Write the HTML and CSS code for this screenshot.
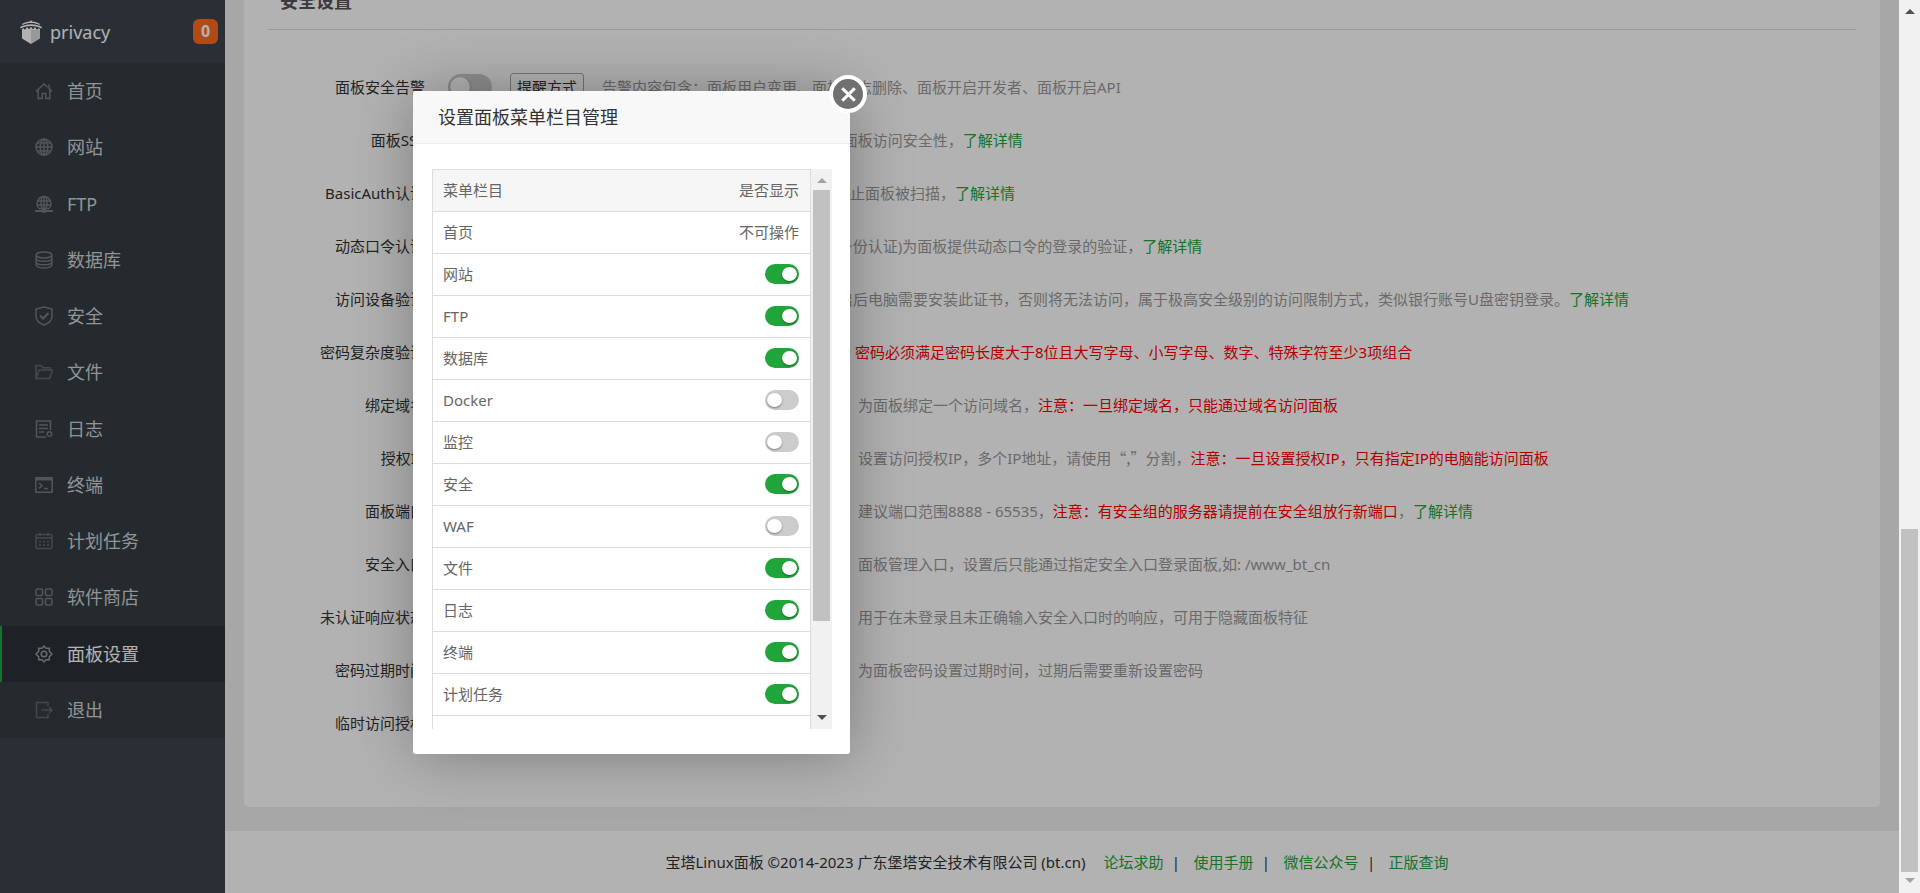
FILE: index.html
```html
<!DOCTYPE html>
<html lang="zh-CN">
<head>
<meta charset="utf-8">
<title>面板设置</title>
<link rel="stylesheet" href="styles.css">
</head>
<body>
<div class="app">
  <aside class="sidebar">
    <header class="brand">
      <svg class="logo" viewBox="0 0 22 24" fill="currentColor"><path d="M11 0l1 1.6c3 .2 5.500 1 8 2.400l-.6 1C16.500 3.600 14 3 11 3S5.500 3.600 2.600 5L2 4c2.500-1.400 5-2.200 8-2.400z"/><path d="M0 7c3.500-1.900 7-2.800 11-2.800S18.500 5.100 22 7l-.8 1.400C17.800 6.700 14.600 6 11 6S4.200 6.700.8 8.400z"/><path d="M2 9l2-.7v1.200l2-.5V7.800l2-.3v1.200h2V7.400h2v1.300h2V7.500l2 .3V9l2 .5V8.300l2 .7v9.500L11 24l-9-5.500z"/><path d="M11 9.500V24l9-5.500V10z" opacity=".2" fill="#3c444d"/></svg>
      <span class="brand-name">privacy</span>
      <span class="badge">0</span>
    </header>
    <nav>
      <ul class="menu">
        <li><a href="#"><svg class="icon" viewBox="0 0 18 18"><path d="M1 9.500L9 2l3.500 3.200M17 9.500l-3-2.800V2.500M3.200 8v8.500h4v-5h3.600v5h4V8"/></svg>首页</a></li>
        <li><a href="#"><svg class="icon" viewBox="0 0 18 18"><circle cx="9" cy="9" r="8"/><ellipse cx="9" cy="9" rx="3.800" ry="8"/><path d="M9 1v16M1 9h16M2.300 5h13.400M2.300 13h13.400"/></svg>网站</a></li>
        <li><a href="#"><svg class="icon" viewBox="0 0 18 18"><path d="M4 13.500a7 7 0 1 1 10 0z"/><ellipse cx="9" cy="8" rx="3" ry="6.500"/><path d="M9 1v12M2.500 6h13M2.500 10h13"/><path d="M0 16h18" stroke-width="2"/><path d="M7 16h4" stroke-width="3.500"/></svg>FTP</a></li>
        <li><a href="#"><svg class="icon" viewBox="0 0 18 18"><ellipse cx="9" cy="4" rx="7.800" ry="3"/><path d="M1.200 4v10c0 1.600 3.500 3 7.800 3s7.800-1.400 7.800-3V4M1.200 7.500c0 1.600 3.500 2.800 7.800 2.800s7.800-1.200 7.800-2.800M1.200 11c0 1.600 3.500 2.800 7.800 2.800s7.800-1.200 7.800-2.800"/></svg>数据库</a></li>
        <li><a href="#"><svg class="icon" viewBox="0 0 18 20"><path d="M9 1l8 2v7.500c0 4-3.500 6.800-8 8.500-4.500-1.700-8-4.500-8-8.500V3z"/><path d="M5 9.500l3 3L13.500 7" stroke-width="2"/></svg>安全</a></li>
        <li><a href="#"><svg class="icon dim" viewBox="0 0 18 18"><path d="M1 15.500V2.500h5l2 2.300h7V7M1 15.500L4 7h13.500l-3 8.500z"/></svg>文件</a></li>
        <li><a href="#"><svg class="icon" viewBox="0 0 18 18"><path d="M11 17H1.500V1h14v9M4 5h9M4 8.500h9M4 12h5"/><circle cx="14.500" cy="14" r="2.300"/></svg>日志</a></li>
        <li><a href="#"><svg class="icon" viewBox="0 0 18 18"><path d="M.8 1.800h16.400v14.500H.8z"/><path d="M.8 3h16.400" stroke-width="3"/><path d="M4 7l3 2.700L4 12.400M9 12.500h4"/></svg>终端</a></li>
        <li><a href="#"><svg class="icon dim" viewBox="0 0 18 18"><rect x="1" y="2.500" width="16" height="14" rx="1.500"/><path d="M1 6h16M5 .8V4M13 .8V4M4 9.500h2M8 9.500h2M12 9.500h2M4 13h2M8 13h2M12 13h2"/></svg>计划任务</a></li>
        <li><a href="#"><svg class="icon" viewBox="0 0 18 18"><rect x="1" y="1" width="6.500" height="6.500" rx="1.300"/><rect x="10.500" y="1" width="6.500" height="6.500" rx="1.300"/><rect x="1" y="10.500" width="6.500" height="6.500" rx="1.300"/><rect x="10.500" y="10.500" width="6.500" height="6.500" rx="1.300"/></svg>软件商店</a></li>
        <li><a class="active" href="#"><svg class="icon" viewBox="0 0 18 18"><path d="M9 1l2 2.200h3.300v3L17 9l-2.700 2.800v3H11L9 17l-2-2.200H3.700v-3L1 9l2.700-2.800v-3H7z"/><circle cx="9" cy="9" r="2.800"/></svg>面板设置</a></li>
        <li><a href="#"><svg class="icon dim" viewBox="0 0 18 18"><path d="M13 5V1.500H1.500v15H13V13M6.500 9H17M14 6l3 3-3 3"/></svg>退出</a></li>
      </ul>
    </nav>
  </aside>

  <main class="main">
    <section class="card">
      <h2>安全设置</h2>
      <div class="row"><label class="name" for="s1">面板安全告警</label><input id="s1" class="switch big" type="checkbox"><button class="btn">提醒方式</button><p>告警内容包含：面板用户变更、面板日志删除、面板开启开发者、面板开启API</p></div>
      <div class="row"><label class="name" for="s2">面板SSL</label><input id="s2" class="switch big" type="checkbox"><button class="btn">面板SSL配置</button><p>为面板设置https协议访问，提升面板访问安全性，<a href="#">了解详情</a></p></div>
      <div class="row"><label class="name" for="s3">BasicAuth认证</label><input id="s3" class="switch big" type="checkbox"><p>为面板增加一道基于BasicAuth的认证服务，有效防止面板被扫描，<a href="#">了解详情</a></p></div>
      <div class="row"><label class="name" for="s4">动态口令认证</label><div class="control c-otp"><input id="s4" class="switch big" type="checkbox"></div><p>基于Google Authenticator (谷歌身份认证)为面板提供动态口令的登录的验证，<a href="#">了解详情</a></p></div>
      <div class="row"><label class="name" for="s5">访问设备验证</label><div class="control c-device"><input id="s5" class="switch big" type="checkbox"></div><p>开启后电脑需要安装此证书，否则将无法访问，属于极高安全级别的访问限制方式，类似银行账号U盘密钥登录。<a href="#">了解详情</a></p></div>
      <div class="row"><label class="name" for="s6">密码复杂度验证</label><div class="control c-strength"><input id="s6" class="switch big" type="checkbox"></div><p class="warn">密码必须满足密码长度大于8位且大写字母、小写字母、数字、特殊字符至少3项组合</p></div>
      <div class="row"><label class="name" for="s7">绑定域名</label><div class="control"><input id="s7" class="field" type="text"><button class="btn">设置</button></div><p>为面板绑定一个访问域名，<span class="warn">注意：一旦绑定域名，只能通过域名访问面板</span></p></div>
      <div class="row"><label class="name" for="s8">授权IP</label><div class="control"><input id="s8" class="field" type="text"><button class="btn">设置</button></div><p>设置访问授权IP，多个IP地址，请使用<span class="cjk">“,”</span>分割，<span class="warn">注意：一旦设置授权IP，只有指定IP的电脑能访问面板</span></p></div>
      <div class="row"><label class="name" for="s9">面板端口</label><div class="control"><input id="s9" class="field" type="text"><button class="btn">设置</button></div><p>建议端口范围8888 - 65535，<span class="warn">注意：有安全组的服务器请提前在安全组放行新端口</span>，<a href="#">了解详情</a></p></div>
      <div class="row"><label class="name" for="s10">安全入口</label><div class="control"><input id="s10" class="field" type="text"><button class="btn">设置</button></div><p>面板管理入口，设置后只能通过指定安全入口登录面板,如: /www_bt_cn</p></div>
      <div class="row"><label class="name" for="s11">未认证响应状态</label><div class="control"><input id="s11" class="field" type="text"><button class="btn">设置</button></div><p>用于在未登录且未正确输入安全入口时的响应，可用于隐藏面板特征</p></div>
      <div class="row"><label class="name" for="s12">密码过期时间</label><div class="control"><input id="s12" class="field" type="text"><button class="btn">设置</button></div><p>为面板密码设置过期时间，过期后需要重新设置密码</p></div>
      <div class="row"><label class="name" for="s13">临时访问授权</label><button id="s13" class="btn">管理</button></div>
    </section>
    <footer class="footer">
      <span class="copyright">宝塔Linux面板 ©2014-2023 广东堡塔安全技术有限公司 (bt.cn)</span>
      <a href="#">论坛求助</a><span class="bar">|</span><a href="#">使用手册</a><span class="bar">|</span><a href="#">微信公众号</a><span class="bar">|</span><a href="#">正版查询</a>
    </footer>
  </main>

  <div class="shade"></div>
  <div class="dialog" role="dialog" aria-labelledby="dlg-title">
    <h3 id="dlg-title">设置面板菜单栏目管理</h3>
    <button class="close" aria-label="关闭"><svg viewBox="0 0 12 12"><path d="M1 1l10 10M11 1L1 11"/></svg></button>
    <div class="dialog-body">
      <div class="viewport">
        <table>
          <thead><tr><th>菜单栏目</th><th>是否显示</th></tr></thead>
          <tbody>
            <tr><td>首页</td><td>不可操作</td></tr>
            <tr><td><label for="m1">网站</label></td><td><input id="m1" class="switch" type="checkbox" checked></td></tr>
            <tr><td><label for="m2">FTP</label></td><td><input id="m2" class="switch" type="checkbox" checked></td></tr>
            <tr><td><label for="m3">数据库</label></td><td><input id="m3" class="switch" type="checkbox" checked></td></tr>
            <tr><td><label for="m4">Docker</label></td><td><input id="m4" class="switch" type="checkbox"></td></tr>
            <tr><td><label for="m5">监控</label></td><td><input id="m5" class="switch" type="checkbox"></td></tr>
            <tr><td><label for="m6">安全</label></td><td><input id="m6" class="switch" type="checkbox" checked></td></tr>
            <tr><td><label for="m7">WAF</label></td><td><input id="m7" class="switch" type="checkbox"></td></tr>
            <tr><td><label for="m8">文件</label></td><td><input id="m8" class="switch" type="checkbox" checked></td></tr>
            <tr><td><label for="m9">日志</label></td><td><input id="m9" class="switch" type="checkbox" checked></td></tr>
            <tr><td><label for="m10">终端</label></td><td><input id="m10" class="switch" type="checkbox" checked></td></tr>
            <tr><td><label for="m11">计划任务</label></td><td><input id="m11" class="switch" type="checkbox" checked></td></tr>
            <tr><td></td><td></td></tr>
          </tbody>
        </table>
      </div>
      <div class="scroll"><i class="up muted"></i><b class="thumb inner"></b><i class="down"></i></div>
    </div>
  </div>
</div>
<div class="scroll page"><i class="up"></i><b class="thumb outer"></b><i class="down muted"></i></div>
</body>
</html>
```
FILE: styles.css
```css
* { box-sizing: border-box; }
body {
  margin: 0;
  height: 100vh;
  display: flex;
  overflow: hidden;
  font: 15px/20px "Noto Sans", "Noto Sans CJK SC", sans-serif;
  color: #333;
}
a { color: #20a53a; text-decoration: none; }
button, input { font: inherit; margin: 0; }
.cjk { font-family: "Noto Sans CJK SC", sans-serif; }

.app { flex: 1; min-width: 0; display: flex; position: relative; overflow: hidden; }

/* sidebar */
.sidebar { width: 225px; flex: none; background: #3c444d; }
.brand { height: 63px; display: flex; align-items: center; padding: 0 7px 0 20px; color: #fff; }
.logo { width: 22px; height: 24px; margin-right: 8px; }
.brand-name { font-size: 18px; flex: 1; }
.badge {
  width: 25px; height: 25px; border-radius: 6px;
  background: #ff6a22; font-weight: 700; font-size: 16px; line-height: 25px; text-align: center;
}
.menu { list-style: none; margin: 0; padding: 0; min-height: 675px; display: grid; grid-auto-rows: 1fr; background: #353d44; }
.menu a {
  height: 100%; display: flex; align-items: center; gap: 14px; padding-left: 33px;
  border-left: 2px solid transparent; color: #d0d3d6; font-size: 18px;
}
.menu .active { background: #2c3138; border-left-color: #20a53a; color: #fff; }
.icon { width: 18px; height: 20px; fill: none; stroke: #767b80; stroke-width: 1.500; }
.icon.dim { stroke: #62686e; }
.active .icon { stroke: #94999e; }

/* settings page */
.main { flex: 1; min-width: 0; display: flex; flex-direction: column; justify-content: flex-end; background: #f0f0f0; }
.card { background: #fff; border-radius: 5px; margin: 0 19px 24px; padding: 40px 24px 58px; }
h2 {
  margin: 0 0 30px; padding-left: 12px; border-bottom: 1px solid #ddd;
  font-size: 18px; line-height: 56px; color: #555;
}
.row { display: flex; align-items: center; height: 53px; white-space: nowrap; }
.row p { margin: 0; color: #999; }
.row .warn, .row p.warn { color: #f00; }
.name { width: 157px; margin-right: 23px; text-align: right; flex: none; }
.control { width: 410px; flex: none; display: flex; align-items: center; }
.c-otp { width: 170px; }
.c-device { width: 375px; }
.c-strength { width: 407px; }
.field { width: 280px; height: 36px; border: 1px solid #ccc; margin-right: 10px; }
.btn { height: 28px; padding: 0 6px; margin-right: 18px; border: 1px solid #aaa; border-radius: 3px; background: #fff; color: #333; }

.switch {
  appearance: none; display: block; width: 34px; height: 20px; flex: none;
  border-radius: 10px; background: #ccc; padding: 3px 2px;
}
.switch::before {
  content: ""; display: block; width: 15px; height: 14px; border-radius: 50%;
  background: #fff; box-shadow: 0 1px 2px rgba(0, 0, 0, .4);
}
.switch:checked { background: #20a53a; padding-left: 17px; }
.switch.big { width: 44px; height: 26px; border-radius: 13px; margin-right: 18px; }
.switch.big::before { width: 20px; height: 20px; }

.footer { height: 62px; flex: none; background: #fff; display: flex; align-items: center; justify-content: center; padding-right: 10px; }
.copyright { margin-right: 18px; }
.bar { width: 30px; text-align: center; padding-right: 5px; }

/* dialog */
.shade { position: absolute; inset: 0; background: rgba(0, 0, 0, .3); }
.dialog {
  position: absolute; left: 413px; top: 91px; width: 437px;
  background: #fff; border-radius: 3px; box-shadow: 1px 1px 62px rgba(0, 0, 0, .3);
}
h3 {
  margin: 0; padding-left: 25px; background: #f8f8f8; border-bottom: 1px solid #eee;
  border-radius: 3px 3px 0 0; font-size: 18px; font-weight: 400; line-height: 52px;
}
.close {
  position: absolute; right: -17px; top: -16px; width: 38px; height: 38px;
  display: grid; place-items: center; padding: 0;
  border: 4px solid #fff; border-radius: 50%; background: #707070;
}
.close svg { width: 15px; height: 15px; stroke: #fff; stroke-width: 2.500; fill: none; }
.dialog-body { display: flex; padding: 25px 18px 25px 19px; height: 610px; }
.viewport { flex: 1; overflow: hidden; }
table { width: 100%; border-collapse: collapse; border: 1px solid #ddd; color: #666; }
tr { height: 42px; border-bottom: 1px solid #ddd; }
thead tr { background: #f6f6f6; }
th, td { padding: 0 11px 2px 10px; font-weight: 400; text-align: left; }
th:last-child, td:last-child { text-align: right; }
td .switch { margin-left: auto; }

/* scroll bars */
.scroll { width: 21px; flex: none; background: #f1f1f1; display: flex; flex-direction: column; align-items: center; }
.up, .down { width: 0; height: 0; border: 5px solid transparent; flex: none; }
.up { margin: 4px 0 7px; border-bottom-color: #505050; }
.down { margin: 12px 0 2px; border-top-color: #505050; }
.up.muted { border-bottom-color: #a3a3a3; }
.down.muted { border-top-color: #a3a3a3; }
.thumb { width: 17px; background: #c1c1c1; }
.inner { flex: 0 0 431px; }
.inner + .down { margin-top: auto; margin-bottom: 4px; }
.outer { margin-top: auto; flex: 0 0 343px; }
.page .down { margin: 6px 0 5px; }
```
